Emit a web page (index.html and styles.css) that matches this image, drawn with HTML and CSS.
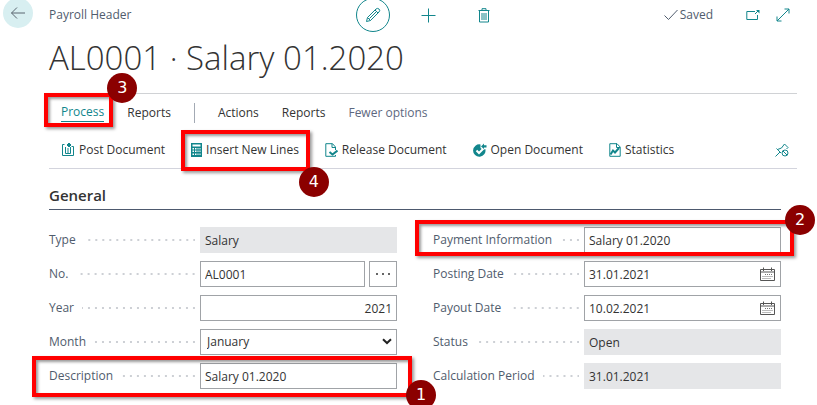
FILE: index.html
```html
<!DOCTYPE html>
<html lang="en">
<head>
<meta charset="utf-8">
<title>AL0001 · Salary 01.2020</title>
<link rel="stylesheet" href="styles.css">
</head>
<body>
<div class="page">
  <header class="topbar">
    <button class="back" type="button" aria-label="Back">
      <svg width="16" height="14" viewBox="0 0 16 14"><path d="M15 7H1.500M7 1.500L1.500 7L7 12.500"/></svg>
    </button>
    <span class="caption">Payroll Header</span>
    <div class="record-actions">
      <button class="edit" type="button" aria-label="Edit">
        <svg width="16" height="16" viewBox="0 0 16 16"><path d="M1.500 14.500L2.500 10.500L11 2Q12.500 .8 14 2T14 5L5.500 13.500ZM2.500 10.500L5.500 13.500M10 3L13 6M4.500 11.500L11.500 4.500"/></svg>
      </button>
      <button class="icon-button" type="button" aria-label="New">
        <svg width="15" height="15" viewBox="0 0 15 15"><path d="M7.500 .5V14.500M.5 7.500H14.500"/></svg>
      </button>
      <button class="icon-button" type="button" aria-label="Delete">
        <svg width="12" height="15" viewBox="0 0 12 15"><path d="M.5 2.500H11.500M4 2.500V.7H8V2.500M1.500 3V14H10.500V3M4 5V12M6 5V12M8 5V12"/></svg>
      </button>
    </div>
    <div class="status">
      <svg class="check" width="14" height="12" viewBox="0 0 14 12"><path d="M.5 6.500L4.500 10.500L13.500 1"/></svg>
      <span>Saved</span>
    </div>
    <button class="icon-button popout" type="button" aria-label="Open in new window">
      <svg width="14" height="12" viewBox="0 0 14 12"><path d="M9 2.500H.8V10.500H11.500V6M9 5L12.500 1.500"/><path class="solid" d="M10 1H13.500V4.500Z"/></svg>
    </button>
    <button class="icon-button" type="button" aria-label="Expand">
      <svg width="14" height="14" viewBox="0 0 14 14"><path d="M1 13L13 1M8.500 1H13V5.500M1 8.500V13H5.500"/></svg>
    </button>
  </header>

  <main class="content">
    <h1>AL0001 · Salary 01.2020</h1>

    <nav class="menu">
      <a class="current" href="#process">Process<span class="mark mark-process"></span><span class="badge badge-process">3</span></a>
      <a href="#reports">Reports</a>
      <span class="divider"></span>
      <a href="#actions">Actions</a>
      <a href="#more-reports">Reports</a>
      <a class="muted" href="#fewer">Fewer options</a>
    </nav>

    <div class="toolbar">
      <button type="button">
        <svg width="14" height="15" viewBox="0 0 14 15"><path d="M3.500 2.500H1.500V13.500H12.500V4.500H10.500M4.500 5V11.500H9.500V5M7 6V11"/><path class="thick" d="M8 1V5M6 3H10"/></svg>
        Post Document
      </button>
      <button type="button">
        <svg width="11" height="14" viewBox="0 0 11 14"><path class="solid" d="M0 0H11V14H0Z"/><path class="paper" d="M1.500 1.500H9.500V3.500H1.500ZM1.500 5H3V6.500H1.500ZM4 5H5.500V6.500H4ZM6.500 5H7.500V6.500H6.500ZM8.500 5H9.500V6.500H8.500ZM1.500 7.500H3V9H1.500ZM4 7.500H5.500V9H4ZM6.500 7.500H7.500V9H6.500ZM8.500 7.500H9.500V9H8.500ZM1.500 10.500H3V12H1.500ZM4 10.500H5.500V12H4ZM6.500 10.500H7.500V12H6.500ZM8.500 10.500H9.500V12H8.500Z"/></svg>
        Insert New Lines
        <span class="mark mark-insert"></span><span class="badge badge-insert">4</span>
      </button>
      <button type="button">
        <svg width="13" height="14" viewBox="0 0 13 14"><path d="M10.500 7V4L7.500 .7H.8V13.300H10.500V12M7 .7V4.500H10.500"/><path class="thick" d="M4.500 9L7.500 11.500L12.500 7.500"/></svg>
        Release Document
      </button>
      <button type="button">
        <svg width="14" height="14" viewBox="0 0 14 14"><path class="solid" d="M7.500 1.500A6.200 6.200 0 1 0 12.300 6L10 7L7.500 5Z"/><path class="solid" d="M8 3.500L11 .5V2.200H13.500V4.500H11V6Z"/><path class="check-light" d="M3.500 7.500L6 10L10 6"/></svg>
        Open Document
      </button>
      <button type="button">
        <svg width="12" height="14" viewBox="0 0 12 14"><path d="M.8 .7H8L11.200 4V13.300H.8ZM7.500 .7V4.500H11"/><path class="thick" d="M1.500 11.500L4 7.500L6 9.500L10 5"/></svg>
        Statistics
      </button>
      <button class="pin" type="button" aria-label="Unpin">
        <svg width="14" height="14" viewBox="0 0 14 14"><path d="M.5 13.500L5 9M1.500 5.500L6 10M2.500 6.500L6.500 5L9.500 1L13 4.500L11.500 6"/><circle cx="10" cy="10" r="3"/><path d="M8 8L12 12"/></svg>
      </button>
    </div>

    <section class="general">
      <h2>General</h2>
      <form class="fields">
        <div class="column">
          <div class="field">
            <label for="type">Type</label><i class="dots"></i>
            <div class="control"><input id="type" value="Salary" readonly></div>
          </div>
          <div class="field">
            <label for="no">No.</label><i class="dots"></i>
            <div class="control"><input id="no" value="AL0001"><button class="lookup" type="button" aria-label="Choose number"><svg width="14" height="2" viewBox="0 0 14 2"><path d="M0 0H2V2H0ZM6 0H8V2H6ZM12 0H14V2H12Z"/></svg></button></div>
          </div>
          <div class="field">
            <label for="year">Year</label><i class="dots"></i>
            <div class="control"><input class="number" id="year" value="2021"></div>
          </div>
          <div class="field">
            <label for="month">Month</label><i class="dots"></i>
            <div class="control"><select id="month"><option>January</option></select><svg class="chevron" width="10" height="7" viewBox="0 0 10 7"><path d="M1 1.200L5 5L9 1.200"/></svg></div>
          </div>
          <div class="field">
            <label for="description">Description</label><i class="dots"></i>
            <div class="control"><input id="description" value="Salary 01.2020"></div>
            <span class="mark mark-description"></span><span class="badge badge-description">1</span>
          </div>
        </div>
        <div class="column">
          <div class="field">
            <label for="payment">Payment Information</label><i class="dots"></i>
            <div class="control"><input id="payment" value="Salary 01.2020"></div>
            <span class="mark mark-payment"></span><span class="badge badge-payment">2</span>
          </div>
          <div class="field">
            <label for="posting">Posting Date</label><i class="dots"></i>
            <div class="control"><input id="posting" value="31.01.2021"><button class="calendar" type="button" aria-label="Pick posting date"><svg width="15" height="14" viewBox="0 0 15 14"><path d="M.5 2.500H14.500V13.500H.5ZM.5 5H14.500M3.500 .5V4M11.500 .5V4"/><path class="days" d="M5 7.500H13M2.500 9.500H13M2.500 11.500H11"/></svg></button></div>
          </div>
          <div class="field">
            <label for="payout">Payout Date</label><i class="dots"></i>
            <div class="control"><input id="payout" value="10.02.2021"><button class="calendar" type="button" aria-label="Pick payout date"><svg width="15" height="14" viewBox="0 0 15 14"><path d="M.5 2.500H14.500V13.500H.5ZM.5 5H14.500M3.500 .5V4M11.500 .5V4"/><path class="days" d="M5 7.500H13M2.500 9.500H13M2.500 11.500H11"/></svg></button></div>
          </div>
          <div class="field">
            <label for="status">Status</label><i class="dots"></i>
            <div class="control"><input id="status" value="Open" readonly></div>
          </div>
          <div class="field">
            <label for="period">Calculation Period</label><i class="dots"></i>
            <div class="control"><input id="period" value="31.01.2021" readonly></div>
          </div>
        </div>
      </form>
    </section>
  </main>
</div>
</body>
</html>
```
FILE: styles.css
```css
* { box-sizing: border-box; }

body {
  margin: 0;
  overflow: hidden;
  background: #fff;
  color: #333;
  font-family: "Open Sans", "Noto Sans", sans-serif;
  font-size: 12px;
  line-height: 16px;
}

button, input, select { font: inherit; color: inherit; }
button { margin: 0; padding: 0; border: 0; background: none; }
a { color: inherit; text-decoration: none; }
h1, h2 { margin: 0; }
svg { display: block; flex: none; fill: none; stroke: #12868c; stroke-width: 1; }
svg .solid { fill: #12868c; stroke: none; }
svg .paper { fill: #fff; stroke: none; }
svg .thick { stroke-width: 2; }
svg .check-light { stroke: #fff; stroke-width: 2; }

/* Top bar */
.topbar {
  position: relative;
  display: flex;
  align-items: center;
  height: 30px;
  padding: 0 27px 0 3px;
}
.back {
  display: grid;
  place-items: center;
  width: 30px;
  height: 30px;
  margin: -4px 16px 0 0;
  border-radius: 50%;
  background: #d8eff1;
}
.back svg { stroke: #5b6670; }
.caption { color: #505c6d; }
.record-actions {
  position: absolute;
  top: -2px;
  left: 50%;
  display: flex;
  align-items: center;
  margin-left: -53px;
}
.edit {
  display: grid;
  place-items: center;
  width: 34px;
  height: 34px;
  margin-right: 31px;
  border: 1px solid #12868c;
  border-radius: 50%;
}
.record-actions .icon-button + .icon-button { margin-left: 42px; }
.status {
  display: flex;
  align-items: center;
  gap: 2px;
  margin-left: auto;
  margin-right: 33px;
  color: #505c6d;
}
.check { stroke: #505c6d; }
.popout { margin-right: 16px; }

/* Page content */
.content { padding: 0 20px 0 49px; }
h1 {
  height: 63px;
  padding-top: 7px;
  font-size: 33px;
  font-weight: 300;
  line-height: 42px;
  white-space: nowrap;
}
.menu {
  display: flex;
  align-items: center;
  gap: 23px;
  height: 38px;
  padding-left: 12px;
  border-top: 1px solid #d0d2d5;
}
.menu a { position: relative; line-height: 18px; }
.menu .current { color: #12868c; border-bottom: 1px solid #12868c; }
.menu .divider { width: 1px; height: 20px; background: #a3aab4; }
.menu .muted { color: #5d6880; }

.toolbar {
  display: flex;
  align-items: center;
  gap: 26px;
  height: 38px;
  padding: 0 8px 0 12px;
  border-bottom: 1px solid #d3d4dd;
}
.toolbar button {
  position: relative;
  display: flex;
  align-items: center;
  gap: 4px;
  white-space: nowrap;
}
.toolbar .pin { margin-left: auto; }

/* General section */
.general { padding: 16px 16px 16px 0; }
h2 {
  height: 25px;
  border-bottom: 1px solid #4d596e;
  font-size: 15px;
  font-weight: 600;
  line-height: 20px;
}
.fields {
  display: grid;
  grid-template-columns: 1fr 1fr;
  gap: 36px;
  padding-top: 17px;
}
.column { display: grid; gap: 8px; }
.field {
  position: relative;
  display: grid;
  grid-template-columns: auto 1fr 197px;
  align-items: center;
  color: #505c6d;
}
.dots {
  height: 2px;
  margin: 0 5px 0 8px;
  background: linear-gradient(90deg, transparent 5px, #cdd0d5 5px) right / 7px 2px repeat-x;
}
.control { position: relative; display: flex; gap: 4px; color: #333; }
input, select {
  flex: 1;
  min-width: 0;
  height: 26px;
  padding: 0 4px;
  border: 1px solid #a0a3a7;
  border-radius: 0;
  background: #fff;
  outline: 0;
}
input[readonly] { border-color: #e5e6e8; background: #e5e6e8; }
select { appearance: none; padding-left: 6px; }
.number { text-align: right; }
.lookup {
  display: grid;
  place-items: center;
  width: 28px;
  border: 1px solid #a0a3a7;
}
.lookup svg { fill: #666; stroke: none; }
.chevron {
  position: absolute;
  top: 9px;
  right: 5px;
  stroke: #222;
  stroke-width: 2;
  pointer-events: none;
}
.calendar { position: absolute; top: 6px; right: 6px; }
.calendar svg { stroke: #555; }
.calendar .days { stroke: #777; stroke-dasharray: 1 1; }

/* Numbered callouts over the form */
.mark {
  position: absolute;
  z-index: 1;
  border: 4px solid #f00;
  box-shadow: 2px 2px 3px rgba(0, 0, 0, .4), inset 2px 2px 3px rgba(0, 0, 0, .4);
  pointer-events: none;
}
.mark-process { inset: -10px -9px -6px -17px; }
.mark-insert { inset: -12px -11px -13px -10px; }
.mark-payment { inset: -7px -13px -3px -18px; }
.mark-description { inset: -7px -15px -8px -17px; }
.badge {
  position: absolute;
  z-index: 2;
  width: 30px;
  height: 30px;
  border-radius: 50%;
  background: #8b0000;
  color: #fff;
  font-family: "DejaVu Sans", sans-serif;
  font-size: 16px;
  line-height: 29px;
  text-align: center;
}
.badge-process { top: -30px; right: -33px; }
.badge-insert { top: 25px; right: -30px; }
.badge-payment { top: -22px; right: -34px; }
.badge-description { top: 17px; right: -39px; }
```
